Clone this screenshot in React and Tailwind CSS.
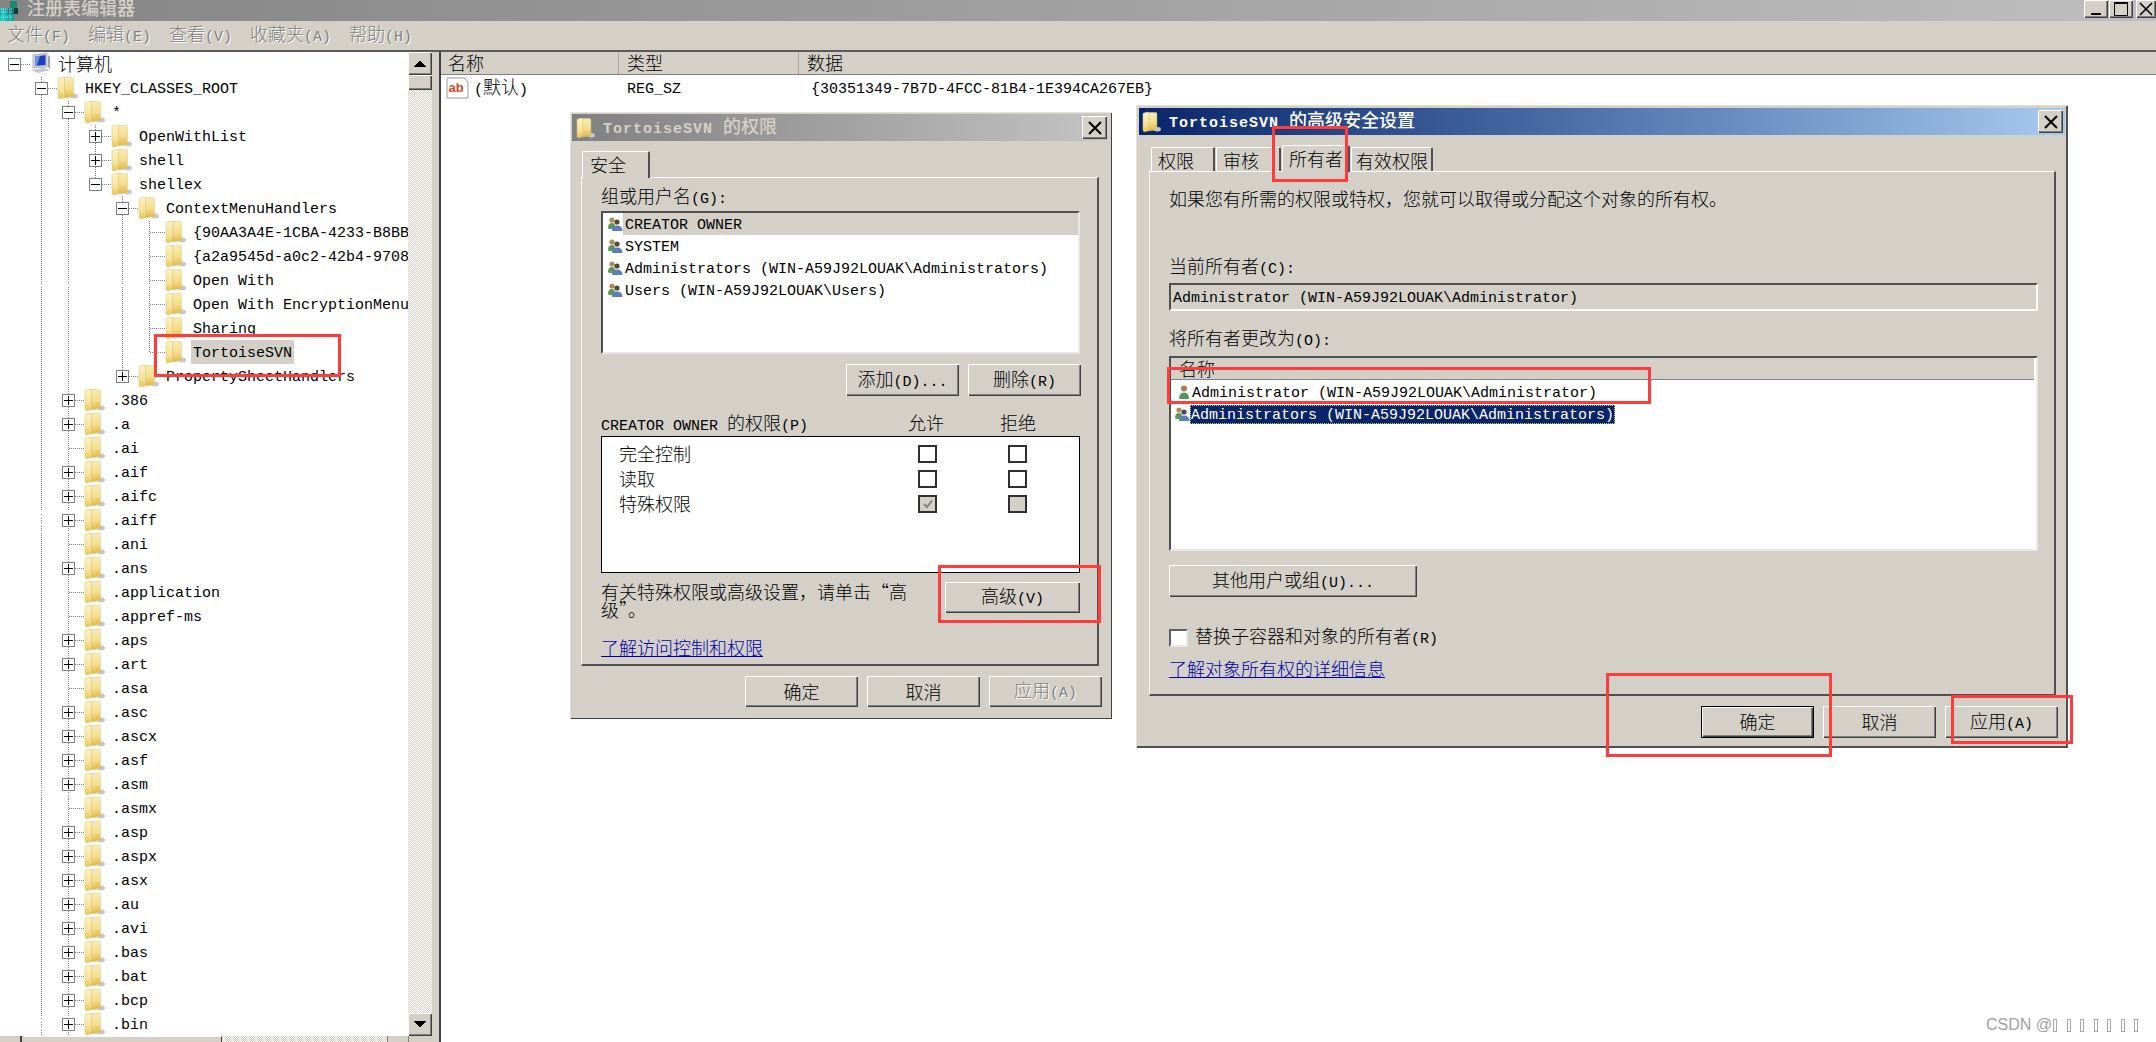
import React from "react";

const BEVEL = "shadow-[inset_1px_1px_0_#fff,inset_-1px_-1px_0_#404040,inset_-2px_-2px_0_#808080]";

function T({ children, title = false, className = "" }) {
  const parts = String(children).match(/[\u2E80-\u9FFF\uFF00-\uFFEF\u201C\u201D\u3000-\u303F]+|[^\u2E80-\u9FFF\uFF00-\uFFEF\u201C\u201D\u3000-\u303F]+/g) || [];
  return (
    <span className={"whitespace-pre leading-[18px] " + className}>
      {parts.map((p, i) =>
        /^[\u2E80-\u9FFF\uFF00-\uFFEF\u201C\u201D\u3000-\u303F]/.test(p) ? (
          <span key={i} className={"font-['Noto_Sans_CJK_SC',sans-serif] text-[18px] " + (title ? "font-medium" : "font-light")}>{p}</span>
        ) : (
          <span key={i} className={"font-['Liberation_Mono',monospace] text-[15px] " + (title ? "font-bold tracking-[1px]" : "")}>{p}</span>
        )
      )}
    </span>
  );
}

function Folder({ className = "" }) {
  return (
    <svg viewBox="0 0 21 24" className={"w-[21px] h-[24px] shrink-0 " + className}>
      <defs>
        <linearGradient id="fa" x1="0" y1="0" x2="0" y2="1">
          <stop offset="0" stopColor="#fdf3c0" />
          <stop offset="0.6" stopColor="#f6e39a" />
          <stop offset="1" stopColor="#e6c65c" />
        </linearGradient>
        <linearGradient id="fb" x1="0" y1="0" x2="0" y2="1">
          <stop offset="0" stopColor="#f9ecb2" />
          <stop offset="0.55" stopColor="#f3dc8c" />
          <stop offset="1" stopColor="#dcb648" />
        </linearGradient>
      </defs>
      <ellipse cx="17" cy="20" rx="4" ry="2.5" fill="#c8c8c8" />
      <path d="M7 1.5 H15 Q16.5 1.5 16.5 3 V20.5 L7 22 Z" fill="url(#fb)" stroke="#e0c878" strokeWidth="0.5" />
      <path d="M1 3 Q1 2 2 2 L6 1 Q7.5 1 7.5 2.5 V21.5 L3 23 Q1.2 23 1 21 Z" fill="url(#fa)" stroke="#d8c070" strokeWidth="0.5" />
    </svg>
  );
}

function People({ dark = false }) {
  return (
    <svg viewBox="0 0 16 16" className="w-4 h-4 shrink-0">
      <circle cx="5" cy="4" r="2.6" fill="#b58a5a" />
      <path d="M1 12 Q1 7 5 7 Q8 7 8 10 V13 H2 Z" fill="#5d9a58" />
      <circle cx="10" cy="6" r="2.6" fill={dark ? "#4a4a60" : "#54453a"} />
      <path d="M5 15 Q5 9.5 10 9.5 Q15.5 9.5 15.5 15 Z" fill="#5d7fb5" />
    </svg>
  );
}

function User() {
  return (
    <svg viewBox="0 0 16 16" className="w-4 h-4 shrink-0">
      <circle cx="8" cy="4.5" r="3" fill="#a77f52" />
      <path d="M3 15 Q3 8.5 8 8.5 Q13 8.5 13 15 Z" fill="#4e9a62" />
    </svg>
  );
}

function CloseBtn() {
  return (
    <div className={"w-[25px] h-[23px] bg-[#d4d0c8] flex items-center justify-center " + BEVEL}>
      <svg viewBox="0 0 14 14" className="w-[14px] h-[14px]">
        <path d="M1 1 L13 13 M13 1 L1 13" stroke="#000" strokeWidth="2" />
      </svg>
    </div>
  );
}

function Btn({ children, w = "w-[113px]", h = "h-[32px]", disabled = false, def = false, className = "" }) {
  return (
    <div className={w + " " + h + " shrink-0 bg-[#d4d0c8] flex items-center justify-center " + (def ? "border border-black " : "") + BEVEL + " " + className}>
      <T className={disabled ? "text-[#808080] [text-shadow:1px_1px_0_#fff]" : "text-black"}>{children}</T>
    </div>
  );
}

function Check({ checked = false, gray = false, sunken = false }) {
  return (
    <div className={"w-[19px] h-[18px] shrink-0 flex items-center justify-center " + (gray ? "bg-[#d4d0c8] " : "bg-white ") + (sunken ? "border-2 border-t-[#606060] border-l-[#606060] border-r-[#e8e8e8] border-b-[#e8e8e8]" : "border-2 border-[#303030]")}>
      {checked && (
        <svg viewBox="0 0 12 12" className="w-3 h-3">
          <path d="M2 6 L5 9 L10 2.5" fill="none" stroke="#808080" strokeWidth="2" />
        </svg>
      )}
    </div>
  );
}

function Red({ className }) {
  return <div className={"absolute z-30 border-[3px] border-[#ff3b3b] pointer-events-none " + className} />;
}

const rows = [
  { l: 0, t: "计算机", b: "-", icon: "pc" },
  { l: 1, t: "HKEY_CLASSES_ROOT", b: "-" },
  { l: 2, t: "*", b: "-" },
  { l: 3, t: "OpenWithList", b: "+" },
  { l: 3, t: "shell", b: "+" },
  { l: 3, t: "shellex", b: "-" },
  { l: 4, t: "ContextMenuHandlers", b: "-" },
  { l: 5, t: "{90AA3A4E-1CBA-4233-B8BB-535773D48449}" },
  { l: 5, t: "{a2a9545d-a0c2-42b4-9708-A0B2BADD77C8}" },
  { l: 5, t: "Open With" },
  { l: 5, t: "Open With EncryptionMenu" },
  { l: 5, t: "Sharing" },
  { l: 5, t: "TortoiseSVN", hl: true },
  { l: 4, t: "PropertySheetHandlers", b: "+" },
  ...[
    [".386", 1], [".a", 1], [".ai", 0], [".aif", 1], [".aifc", 1], [".aiff", 1], [".ani", 0], [".ans", 1],
    [".application", 0], [".appref-ms", 0], [".aps", 1], [".art", 1], [".asa", 0], [".asc", 1], [".ascx", 1],
    [".asf", 1], [".asm", 1], [".asmx", 0], [".asp", 1], [".aspx", 1], [".asx", 1], [".au", 1], [".avi", 1],
    [".bas", 1], [".bat", 1], [".bcp", 1], [".bin", 1],
  ].map(([t, b]) => ({ l: 2, t, b: b ? "+" : undefined })),
];

function Guides({ i, l }) {
  const x = (n) => 14.5 + 27 * n;
  const seg = [];
  const v = (n, half) => seg.push(<line key={n} x1={x(n)} x2={x(n)} y1="0.5" y2={half ? 12 : 24} />);
  if (i >= 1) v(1, false);
  if (i >= 2) v(2, false);
  if (i >= 3 && i <= 5) v(3, i === 5);
  if (i >= 6 && i <= 13) v(4, i === 13);
  if (i >= 7 && i <= 12) v(5, i === 12);
  return (
    <svg className="absolute left-0 top-0 w-[408px] h-6" shapeRendering="crispEdges">
      <g stroke="#808080" strokeWidth="1" strokeDasharray="1 1">
        {seg}
        <line x1={x(l)} x2={x(l) + 15} y1="12.5" y2="12.5" />
      </g>
    </svg>
  );
}

function TreeRow({ r, i }) {
  return (
    <div className="relative h-6 flex items-center" style={{ paddingLeft: 8 + 27 * r.l }}>
      <Guides i={i} l={r.l} />
      <div className="relative w-[13px] h-[13px] shrink-0 mr-[9px]">
        {r.b && (
          <div className="w-[13px] h-[13px] border border-[#808080] bg-white flex items-center justify-center">
            <svg viewBox="0 0 11 11" className="w-[11px] h-[11px]" shapeRendering="crispEdges">
              <path d={r.b === "+" ? "M1 5.5 H10 M5.5 1 V10" : "M1 5.5 H10"} stroke="#000" strokeWidth="1" />
            </svg>
          </div>
        )}
      </div>
      {r.icon === "pc" ? (
        <svg viewBox="0 0 21 24" className="relative w-[21px] h-[24px] shrink-0">
          <path d="M3 3 L17 1 V15 L3 16 Z" fill="#d0d4da" stroke="#8a8f98" strokeWidth="0.6" />
          <path d="M5 4.5 L15.5 3 V13 L5 14 Z" fill="#1f3fb8" />
          <path d="M5 4.5 L10 3.8 L7 14 L5 14 Z" fill="#6f8fe0" />
          <path d="M1 18 L13 16 L20 18 L8 21 Z" fill="#c4c8cf" />
          <path d="M18 3 L20 5 V17 L18 15 Z" fill="#9ea3ab" />
        </svg>
      ) : (
        <Folder className="relative" />
      )}
      <div className={"relative ml-[5px] h-6 flex items-center px-[2px] " + (r.hl ? "bg-[#d4d0c8]" : "")}>
        <T className="text-black">{r.t}</T>
      </div>
    </div>
  );
}

function Arrow({ down = false }) {
  return (
    <div className={"w-[24px] h-[23px] shrink-0 bg-[#d4d0c8] flex items-center justify-center " + BEVEL}>
      <svg viewBox="0 0 12 7" className="w-3 h-[7px]" shapeRendering="crispEdges">
        <polygon points={down ? "0,0 12,0 6,7" : "6,0 12,7 0,7"} fill="#000" />
      </svg>
    </div>
  );
}

const DITHER = "bg-[repeating-conic-gradient(#d4d0c8_0_25%,#ffffff_0_50%)] bg-[length:2px_2px]";

function MainWindow() {
  return (
    <div className="w-full h-full flex flex-col">
      <div className="h-[21px] shrink-0 flex items-center overflow-hidden bg-gradient-to-r from-[#858585] to-[#bebebe]">
        <svg viewBox="0 0 22 20" className="w-[22px] h-5 shrink-0">
          <rect x="0" y="7" width="7" height="7" fill="#1fb6b6" />
          <rect x="0" y="14" width="7" height="6" fill="#19c4c4" />
          <rect x="7" y="7" width="7" height="6" fill="#0f7f7f" />
          <rect x="7" y="13" width="7" height="7" fill="#13a5a5" />
          <rect x="10" y="0" width="7" height="7" fill="#1a8c6e" />
          <rect x="14" y="7" width="4" height="6" fill="#0b3b3b" />
          <path d="M1 8 H13 M1 11 H13 M1 16 H13 M3 8 V20 M10 8 V20" stroke="#e6ffff" strokeWidth="0.7" strokeDasharray="1 1" />
        </svg>
        <div className="ml-[5px] -mt-[5px]">
          <T title className="text-[#d4d0c8]">注册表编辑器</T>
        </div>
        <div className="ml-auto flex self-start gap-[1px]">
          <div className={"w-[24px] h-[18px] bg-[#d4d0c8] flex items-end justify-center pb-[3px] " + BEVEL}>
            <div className="w-[10px] h-[2px] bg-black" />
          </div>
          <div className={"w-[24px] h-[18px] bg-[#d4d0c8] flex items-center justify-center " + BEVEL}>
            <div className="w-[14px] h-[14px] border border-black border-t-2" />
          </div>
          <div className={"ml-[2px] w-[20px] h-[18px] bg-[#d4d0c8] flex items-center justify-center " + BEVEL}>
            <svg viewBox="0 0 14 14" className="w-[14px] h-[14px]">
              <path d="M1 1 L13 13 M13 1 L1 13" stroke="#000" strokeWidth="1.6" />
            </svg>
          </div>
        </div>
      </div>

      <div className="h-[31px] shrink-0 bg-[#d4d0c8] flex items-center pl-[7px] gap-[18px] border-b-2 border-[#5a5a5a]">
        {["文件(F)", "编辑(E)", "查看(V)", "收藏夹(A)", "帮助(H)"].map((m) => (
          <T key={m} className="text-[#808080] [text-shadow:1px_1px_0_#fff]">{m}</T>
        ))}
      </div>

      <div className="flex-1 min-h-0 flex">
        <div className="w-[432px] shrink-0 flex flex-col">
          <div className="flex-1 min-h-0 flex">
            <div className="w-[408px] overflow-hidden">
              {rows.map((r, i) => (
                <TreeRow key={i} r={r} i={i} />
              ))}
            </div>
            <div className="w-[24px] flex flex-col">
              <Arrow />
              <div className={"h-[15px] bg-[#d4d0c8] " + BEVEL} />
              <div className={"flex-1 " + DITHER} />
              <Arrow down />
            </div>
          </div>
          <div className="h-[6px] shrink-0 bg-[#d4d0c8] flex">
            <div className="w-[22px] border-r-2 border-[#404040]" />
            <div className="w-[198px] border-t border-white border-r border-r-[#404040] ml-[2px]" />
            <div className={"w-[165px] " + DITHER} />
            <div className="w-[22px] border-x border-[#808080]" />
          </div>
        </div>
        <div className="w-[9px] shrink-0 bg-[#d4d0c8] border-r-2 border-[#404040]" />
        <div className="flex-1 min-w-0 flex flex-col">
          <div className="h-[23px] shrink-0 bg-[#d4d0c8] border-b border-[#808080] flex items-center">
            <div className="w-[178px] h-full flex items-center pl-[7px] border-r border-[#a8a8a8]"><T className="text-black">名称</T></div>
            <div className="w-[180px] h-full flex items-center pl-[8px] border-r border-[#a8a8a8]"><T className="text-black">类型</T></div>
            <div className="pl-[8px]"><T className="text-black">数据</T></div>
          </div>
          <div className="h-[26px] flex items-center">
            <div className="w-[178px] pl-[5px] flex items-center gap-[5px]">
              <svg viewBox="0 0 23 24" className="w-[23px] h-[24px] shrink-0">
                <path d="M1 2 H18 L22 6 V22 H1 Z" fill="#fff" stroke="#9a9a9a" strokeWidth="1" />
                <text x="2.5" y="16" fontFamily="Liberation Sans" fontWeight="700" fontSize="13" fill="#d9482b">ab</text>
              </svg>
              <T className="text-black">(默认)</T>
            </div>
            <div className="w-[180px] pl-[8px]"><T className="text-black">REG_SZ</T></div>
            <div className="pl-[12px]"><T className="text-black">{"{30351349-7B7D-4FCC-81B4-1E394CA267EB}"}</T></div>
          </div>
        </div>
      </div>
    </div>
  );
}

function Dialog1() {
  const list = [
    "CREATOR OWNER",
    "SYSTEM",
    "Administrators (WIN-A59J92LOUAK\\Administrators)",
    "Users (WIN-A59J92LOUAK\\Users)",
  ];
  const perms = [
    ["完全控制", false, false],
    ["读取", false, false],
    ["特殊权限", true, true],
  ];
  return (
    <div className="absolute left-[570px] top-[112px] w-[542px] h-[607px] z-10 bg-[#d4d0c8] shadow-[inset_1px_1px_0_#e4e1da,inset_-1px_-1px_0_#404040]">
      <div className="pt-[2px] ml-[2px] mr-[5px]">
        <div className="h-[27px] flex items-center bg-gradient-to-r from-[#808080] to-[#c4c4c4]">
          <Folder className="ml-[3px] scale-[0.9]" />
          <div className="ml-[7px]"><T title className="text-[#d4d0c8]">TortoiseSVN 的权限</T></div>
          <div className="ml-auto"><CloseBtn /></div>
        </div>
      </div>
      <div className="mt-[10px] ml-[11px]">
        <div className="relative z-10 ml-[1px] w-[68px] h-[27px] -mb-[1px] bg-[#d4d0c8] border-t border-l border-white border-r-2 border-r-[#505050] rounded-t-[2px] pl-[7px] pt-[3px]">
          <T className="text-black">安全</T>
        </div>
        <div className="w-[518px] h-[489px] border-t border-l border-white border-r-2 border-b-2 border-r-[#505050] border-b-[#505050] pl-[19px] pt-[8px]">
          <div className="h-[18px]"><T className="text-black">组或用户名(G):</T></div>
          <div className="mt-[7px] w-[479px] h-[143px] bg-white border-2 border-t-[#505050] border-l-[#505050] border-r-[#e8e8e8] border-b-[#e8e8e8]">
            {list.map((t, i) => (
              <div key={t} className="h-[22px] flex items-center pl-[4px]">
                <People />
                <div className={"h-[22px] flex items-center pl-[2px] flex-1 " + (i === 0 ? "bg-[#d4d0c8]" : "")}>
                  <T className="text-black">{t}</T>
                </div>
              </div>
            ))}
          </div>
          <div className="mt-[10px] w-[480px] flex justify-end gap-[9px]">
            <Btn>添加(D)...</Btn>
            <Btn>删除(R)</Btn>
          </div>
          <div className="mt-[17px] h-[18px] flex">
            <div className="w-[307px]"><T className="text-black">CREATOR OWNER 的权限(P)</T></div>
            <div className="w-[92px]"><T className="text-black">允许</T></div>
            <T className="text-black">拒绝</T>
          </div>
          <div className="mt-[5px] w-[479px] h-[137px] bg-white border border-black pt-[4px] pl-[17px]">
            {perms.map(([t, c, g]) => (
              <div key={t} className="h-[25px] flex items-center">
                <div className="w-[299px]"><T className="text-black">{t}</T></div>
                <Check checked={c} gray={g} />
                <div className="w-[71px]" />
                <Check gray={g} />
              </div>
            ))}
          </div>
          <div className="mt-[9px] flex w-[479px]">
            <div className="w-[344px] flex flex-col">
              <T className="text-black h-[18px]">有关特殊权限或高级设置，请单击“高</T>
              <T className="text-black h-[18px]">级”。</T>
            </div>
            <Btn w="w-[135px]" h="h-[31px]">高级(V)</Btn>
          </div>
          <div className="mt-[20px] h-[18px]">
            <T className="text-[#0000a8] underline">了解访问控制和权限</T>
          </div>
        </div>
      </div>
      <div className="mt-[10px] ml-[175px] flex gap-[9px]">
        <Btn h="h-[31px]">确定</Btn>
        <Btn h="h-[31px]">取消</Btn>
        <Btn h="h-[31px]" disabled>应用(A)</Btn>
      </div>
    </div>
  );
}

function Tab({ w, children, active = false, pl = "pl-[6px]" }) {
  return (
    <div className={w + " " + pl + " shrink-0 bg-[#d4d0c8] border-t border-l border-white border-r-2 border-r-[#505050] rounded-t-[2px] pt-[3px] " + (active ? "h-[27px] -mb-[1px] relative z-10" : "h-[24px]")}>
      <T className="text-black">{children}</T>
    </div>
  );
}

function Dialog2() {
  return (
    <div className="absolute left-[1136px] top-[105px] w-[932px] h-[643px] z-20 bg-[#d4d0c8] shadow-[inset_1px_1px_0_#e4e1da,inset_-2px_-2px_0_#505050]">
      <div className="pt-[3px] mx-[3px]">
        <div className="h-[27px] flex items-center bg-gradient-to-r from-[#0a246a] to-[#a6caf0]">
          <Folder className="ml-[2px] scale-[0.9]" />
          <div className="ml-[7px]"><T title className="text-white">TortoiseSVN 的高级安全设置</T></div>
          <div className="ml-auto mr-[2px]"><CloseBtn /></div>
        </div>
      </div>
      <div className="mt-[10px] ml-[13px]">
        <div className="h-[26px] flex items-end pl-[2px] gap-[1px]">
          <Tab w="w-[64px]">权限</Tab>
          <Tab w="w-[65px]" pl="pl-[6px]">审核</Tab>
          <Tab w="w-[68px]" active pl="pl-[6px]">所有者</Tab>
          <Tab w="w-[82px]" pl="pl-[4px]">有效权限</Tab>
        </div>
        <div className="w-[907px] h-[525px] border-t border-l border-white border-r-2 border-b-2 border-r-[#505050] border-b-[#505050] pl-[19px] pt-[17px]">
          <div className="h-[18px]"><T className="text-black">如果您有所需的权限或特权，您就可以取得或分配这个对象的所有权。</T></div>
          <div className="mt-[49px] h-[18px]"><T className="text-black">当前所有者(C):</T></div>
          <div className="mt-[9px] w-[869px] h-[28px] border-2 border-t-[#505050] border-l-[#505050] border-r-white border-b-white flex items-center pl-[2px]">
            <T className="text-black">Administrator (WIN-A59J92LOUAK\Administrator)</T>
          </div>
          <div className="mt-[17px] h-[18px]"><T className="text-black">将所有者更改为(O):</T></div>
          <div className="mt-[10px] w-[869px] h-[195px] bg-white border-2 border-t-[#505050] border-l-[#505050] border-r-[#e8e8e8] border-b-[#e8e8e8]">
            <div className="w-[863px] h-[22px] bg-[#d4d0c8] border-b border-[#808080] pl-[8px] flex items-center">
              <T className="text-black">名称</T>
            </div>
            <div className="mt-[1px] h-[22px] flex items-center pl-[5px]">
              <User />
              <T className="text-black">Administrator (WIN-A59J92LOUAK\Administrator)</T>
            </div>
            <div className="h-[22px] flex items-center pl-[3px]">
              <People dark />
              <div className="h-[19px] flex items-center px-[1px] bg-[#0a246a] outline-1 outline-dotted outline-[#e0c860] -outline-offset-1">
                <T className="text-white">Administrators (WIN-A59J92LOUAK\Administrators)</T>
              </div>
            </div>
          </div>
          <Btn w="w-[248px]" className="mt-[14px]">{"其他用户或组(U)..."}</Btn>
          <div className="mt-[31px] h-[19px] flex items-center">
            <Check sunken />
            <div className="ml-[7px]"><T className="text-black">替换子容器和对象的所有者(R)</T></div>
          </div>
          <div className="mt-[12px] h-[18px]">
            <T className="text-[#0000a8] underline">了解对象所有权的详细信息</T>
          </div>
        </div>
      </div>
      <div className="mt-[10px] ml-[565px] flex gap-[9px]">
        <Btn def>确定</Btn>
        <Btn>取消</Btn>
        <Btn>应用(A)</Btn>
      </div>
    </div>
  );
}

export default function App() {
  return (
    <div className="relative w-[2156px] h-[1042px] overflow-hidden bg-white leading-[18px]">
      <MainWindow />
      <Dialog1 />
      <Dialog2 />
      <Red className="left-[154px] top-[334px] w-[187px] h-[43px]" />
      <Red className="left-[938px] top-[565px] w-[163px] h-[58px]" />
      <Red className="left-[1272px] top-[126px] w-[76px] h-[56px]" />
      <Red className="left-[1167px] top-[367px] w-[484px] h-[37px]" />
      <Red className="left-[1606px] top-[673px] w-[226px] h-[84px]" />
      <Red className="left-[1951px] top-[695px] w-[122px] h-[49px]" />
      <div className="absolute z-30 left-[1986px] top-[1016px] h-[18px] flex items-center text-[#a0a0a0]">
        <span className="font-['Liberation_Sans',sans-serif] text-[16px] leading-[18px] whitespace-pre">CSDN @</span>
        <div className="flex gap-[9.5px] ml-[1px]">
          {[0, 1, 2, 3, 4, 5, 6].map((i) => (
            <div key={i} className="w-[4px] h-[13px] border border-[#a8a8a8]" />
          ))}
        </div>
      </div>
    </div>
  );
}
